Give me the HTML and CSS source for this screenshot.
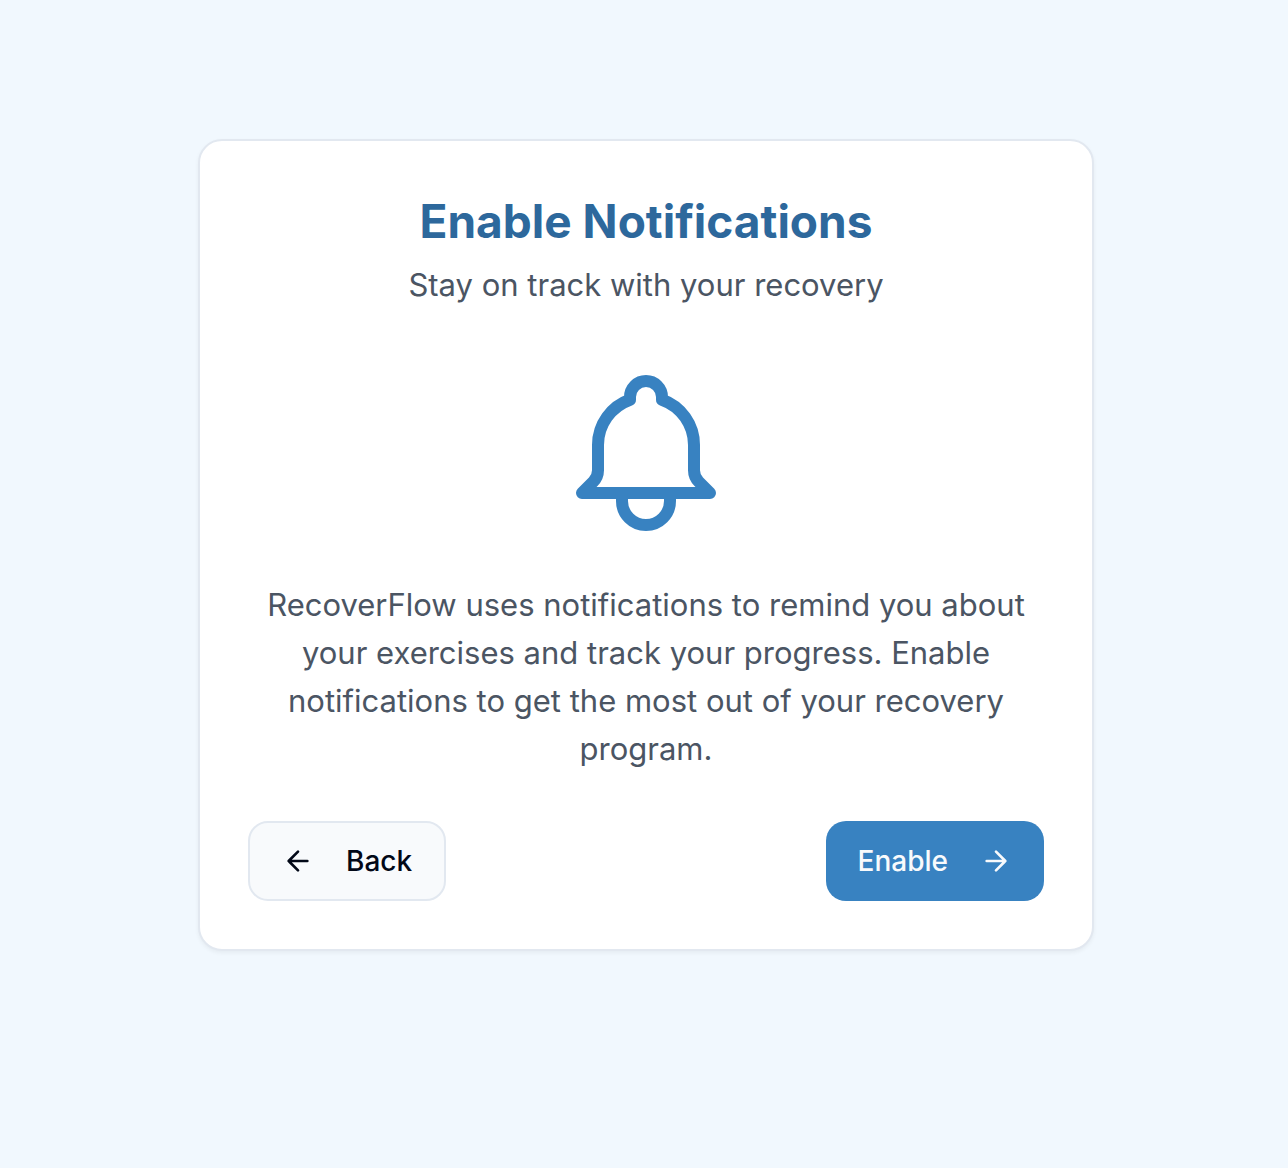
FILE: index.html
```html
<!DOCTYPE html>
<html lang="en">
<head>
<meta charset="utf-8">
<meta name="viewport" content="width=device-width, initial-scale=1">
<title>Enable Notifications</title>
<link rel="stylesheet" href="styles.css">
</head>
<body>
<main class="page">
  <section class="card">
    <header class="card-header">
      <h1 class="title">Enable Notifications</h1>
      <p class="subtitle">Stay on track with your recovery</p>
    </header>
    <svg class="bell" viewBox="0 0 24 24" aria-hidden="true">
      <path d="M15 17h5l-1.405-1.405A2.032 2.032 0 0118 14.158V11a6.002 6.002 0 00-4-5.659V5a2 2 0 10-4 0v.341C7.67 6.165 6 8.388 6 11v3.159c0 .538-.214 1.055-.595 1.436L4 17h5m6 0v1a3 3 0 11-6 0v-1m6 0H9"/>
    </svg>
    <p class="description">RecoverFlow uses notifications to remind you about your exercises and track your progress. Enable notifications to get the most out of your recovery program.</p>
    <footer class="actions">
      <button class="button button-outline" type="button">
        <svg class="arrow" viewBox="0 0 24 24" aria-hidden="true"><path d="m12 19-7-7 7-7M19 12H5"/></svg>
        Back
      </button>
      <button class="button button-primary" type="button">
        Enable
        <svg class="arrow" viewBox="0 0 24 24" aria-hidden="true"><path d="M5 12h14M12 5l7 7-7 7"/></svg>
      </button>
    </footer>
  </section>
</main>
</body>
</html>
```
FILE: styles.css
```css
*,
*::before,
*::after {
  box-sizing: border-box;
}

body {
  margin: 0;
  background: #f1f8fe;
  font-family: Inter, "Liberation Sans", sans-serif;
  color: #020817;
}

.page {
  min-height: 100vh;
  padding: 139px 16px 48px 20px;
}

.card {
  display: flex;
  flex-direction: column;
  align-items: center;
  max-width: 896px;
  margin: 0 auto;
  padding: 48px;
  background: #fff;
  border: 2px solid #e2e8f0;
  border-radius: 24px;
  box-shadow: 0 2px 4px rgba(0, 0, 0, 0.05);
  text-align: center;
}

.card-header {
  display: flex;
  flex-direction: column;
  gap: 8px;
  margin-bottom: 48px;
}

.title,
.subtitle,
.description {
  margin: 0;
}

.title {
  font-size: 46px;
  line-height: 64px;
  font-weight: 700;
  color: #2d689c;
}

.subtitle,
.description {
  font-size: 31px;
  line-height: 48px;
  color: #4b5563;
}

.bell {
  width: 192px;
  height: 192px;
  margin-bottom: 32px;
  fill: none;
  stroke: #3882c1;
  stroke-width: 1.5;
  stroke-linecap: round;
  stroke-linejoin: round;
}

.description {
  margin-bottom: 48px;
}

.actions {
  display: flex;
  justify-content: space-between;
  width: 100%;
}

.button {
  display: inline-flex;
  align-items: center;
  gap: 32px;
  height: 80px;
  padding: 0 32px;
  border: 0;
  border-radius: 20px;
  font: inherit;
  font-size: 28px;
  font-weight: 500;
  cursor: pointer;
}

.button-outline {
  border: 2px solid #e2e8f0;
  background: #f8fafc;
  color: #020817;
}

.button-primary {
  background: #3882c1;
  color: #f8fafc;
}

.arrow {
  width: 32px;
  height: 32px;
  fill: none;
  stroke: currentColor;
  stroke-width: 2;
  stroke-linecap: round;
  stroke-linejoin: round;
}
```
